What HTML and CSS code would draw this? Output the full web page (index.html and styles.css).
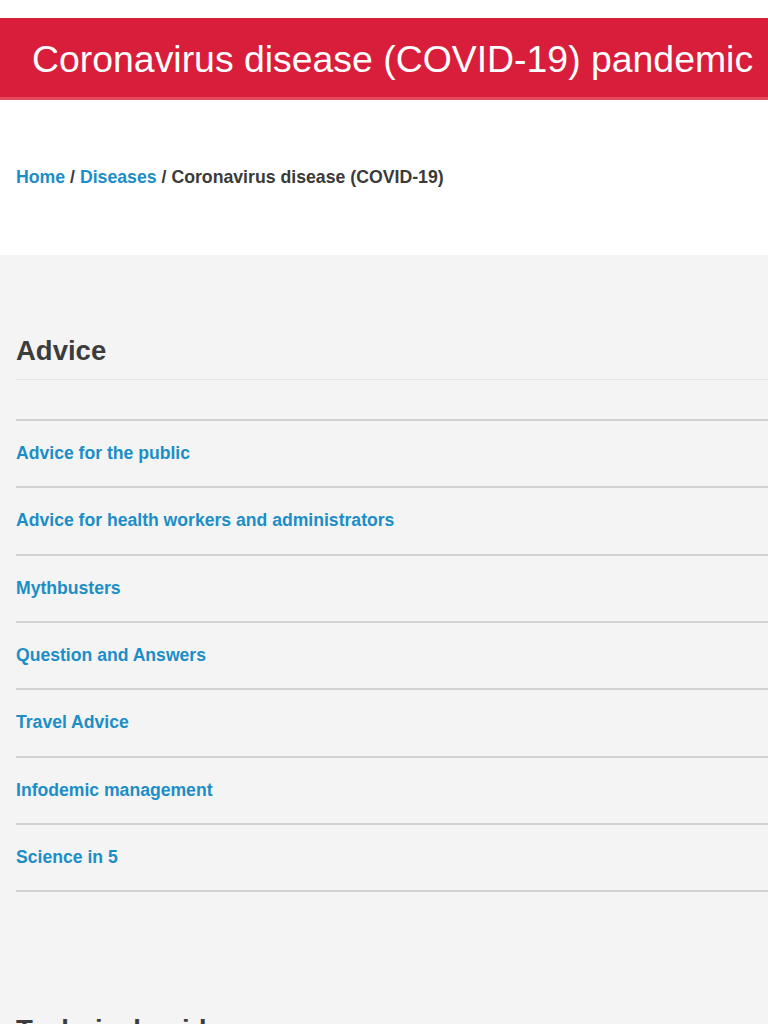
FILE: index.html
```html
<!DOCTYPE html>
<html lang="en">
<head>
    <meta charset="UTF-8">
    <meta name="viewport" content="width=device-width, initial-scale=1.0">
    <title>Coronavirus disease (COVID-19) pandemic</title>
    <link rel="stylesheet" href="styles.css">
</head>
<body>
    <div class="page-top">
        <h1 class="page-title">Coronavirus disease (COVID-19) pandemic</h1>
    </div>

    <div class="breadcrumb">
        <a href="#">Home</a> / <a href="#">Diseases</a> / <span>Coronavirus disease (COVID-19)</span>
    </div>

    <div class="content">
        <!-- Advice links -->
        <section class="link-section">
            <h2 class="section-title">Advice</h2>
            <ul class="link-list">
                <li><a href="#">Advice for the public</a></li>
                <li><a href="#">Advice for health workers and administrators</a></li>
                <li><a href="#">Mythbusters</a></li>
                <li><a href="#">Question and Answers</a></li>
                <li><a href="#">Travel Advice</a></li>
                <li><a href="#">Infodemic management</a></li>
                <li><a href="#">Science in 5</a></li>
            </ul>
        </section>

        <section class="link-section">
            <h2 class="section-title">Technical guidance</h2>
        </section>
    </div>
</body>
</html>
```

FILE: styles.css
```css
/* General styles */
body {
    font-family: "Liberation Sans", Arial, sans-serif;
    background-color: #f4f4f4;
    margin: 0;
    padding: 0;
}

a {
    color: #1b8ec8;
    text-decoration: none;
}

/* Red title bar */
.page-top {
    background-color: #ffffff;
    padding-top: 18px;
}

.page-title {
    margin: 0;
    padding: 20px 0 17px 32px;
    background-color: #d81e3a;
    border-bottom: 3px solid #e4485c;
    color: #ffffff;
    font-size: 37.4px;
    font-weight: normal;
    line-height: 42px;
    white-space: nowrap;
}

/* Breadcrumb */
.breadcrumb {
    background-color: #ffffff;
    padding: 65px 16px 66px;
    font-size: 17.7px;
    font-weight: bold;
    line-height: 24px;
    color: #3a3a3a;
}

/* Link sections */
.content {
    padding: 0 0 0 16px;
}

.link-section {
    padding-top: 78px;
}

.section-title {
    margin: 0;
    padding-bottom: 10px;
    border-bottom: 1px solid #e6e6e6;
    color: #3c3c3c;
    font-size: 27.5px;
    line-height: 36px;
}

.link-list {
    list-style: none;
    margin: 39px 0 42px;
    padding: 0;
}

.link-list li {
    border-top: 2px solid #d2d2d2;
    padding: 20px 0;
    font-size: 17.6px;
    font-weight: bold;
    line-height: 25.33px;
}

.link-list li:last-child {
    border-bottom: 2px solid #d2d2d2;
}
```
